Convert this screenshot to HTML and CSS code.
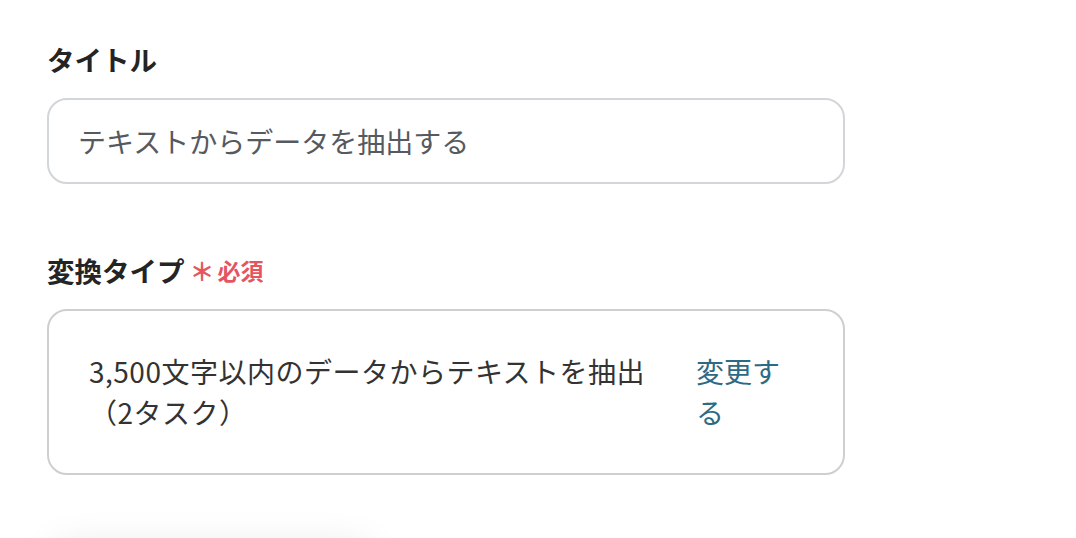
FILE: index.html
```html
<!DOCTYPE html>
<html lang="ja">
<head>
<meta charset="utf-8">
<link rel="stylesheet" href="styles.css">
</head>
<body>
<div class="form">
  <div class="field">
    <div class="label">タイトル</div>
    <div class="input">テキストからデータを抽出する</div>
  </div>
  <div class="field field-type">
    <div class="label">変換タイプ<span class="req"><span class="ast">＊</span>必須</span></div>
    <div class="select">
      <div class="select-text">3,500文字以内のデータからテキストを抽出（2タスク）</div>
      <a class="change">変更する</a>
    </div>
  </div>
  <div class="shadow-card"></div>
</div>
</body>
</html>
```

FILE: styles.css
```css
html, body {
  margin: 0;
  padding: 0;
  background: #ffffff;
  overflow: hidden;
  height: 538px;
}
body {
  font-family: "Noto Sans CJK JP", "Noto Sans", sans-serif;
  color: #222;
}
.form {
  padding: 39px 0 0 47px;
  width: 798px;
}
.label {
  font-size: 27.5px;
  font-weight: 700;
  line-height: 40px;
  color: #242424;
  display: flex;
  align-items: center;
}
.req {
  color: #e5555f;
  font-size: 23px;
  margin-left: 5px;
  display: inline-flex;
  align-items: center;
}
.ast {
  font-size: 25px;
  margin-right: 3px;
}
.input {
  margin-top: 19px;
  height: 86px;
  box-sizing: border-box;
  border: 2px solid #d3d6d9;
  border-radius: 20px;
  padding: 0 29px;
  display: flex;
  align-items: center;
  font-size: 28px;
  color: #555a60;
}
.field-type {
  margin-top: 66px;
}
.select {
  margin-top: 19px;
  height: 166px;
  box-sizing: border-box;
  border: 2px solid #cfcfcf;
  border-radius: 20px;
  padding: 0 57px 0 40px;
  display: flex;
  align-items: center;
  gap: 40px;
  font-size: 28px;
  line-height: 41px;
}
.select-text {
  flex: 1;
  color: #333;
  letter-spacing: 0.5px;
}
.change {
  width: 90px;
  color: #2d6a84;
  flex-shrink: 0;
  cursor: pointer;
}
.shadow-card {
  margin-top: 72px;
  width: 330px;
  height: 60px;
  border-radius: 30px;
  background: #fff;
  box-shadow: 0 0 40px rgba(0, 0, 0, 0.1);
}
```
